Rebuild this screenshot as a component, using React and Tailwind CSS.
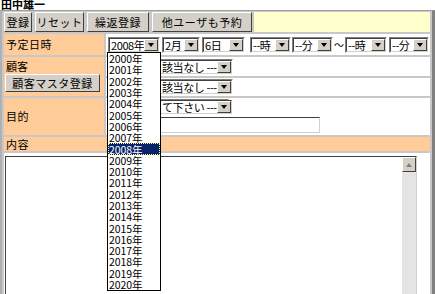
import React from "react";

const years = [];
for (let y = 2000; y <= 2020; y++) years.push(y);

function Arrow({ up }) {
  return (
    <div
      className={
        "w-0 h-0 border-l-[3.5px] border-r-[3.5px] border-l-transparent border-r-transparent " +
        (up ? "border-b-[4px] border-b-[#808080]" : "border-t-[4px] border-t-black")
      }
    />
  );
}

function Select({ w, children, className = "" }) {
  return (
    <div
      className={
        "h-[16px] flex bg-white border border-t-[#808080] border-l-[#808080] border-b-white border-r-white " +
        w +
        " " +
        className
      }
    >
      <div className="flex-1 flex border border-t-[#404040] border-l-[#404040] border-b-[#d4d0c8] border-r-[#d4d0c8]">
        <div className="flex-1 flex items-center pl-[1px] text-[11px] leading-[12px] tracking-[-0.4px] whitespace-nowrap">
          {children}
        </div>
        <div className="w-[14px] shrink-0 bg-[#d4d0c8] flex items-center justify-center border border-t-white border-l-white border-b-[#404040] border-r-[#404040]">
          <Arrow />
        </div>
      </div>
    </div>
  );
}

function Btn({ children, className = "" }) {
  return (
    <div
      className={
        "flex items-center justify-center bg-[#d4d0c8] border border-t-white border-l-white border-b-[#404040] border-r-[#404040] text-[11px] leading-[12px] tracking-[0.5px] whitespace-nowrap " +
        className
      }
    >
      {children}
    </div>
  );
}

export default function App() {
  return (
    <div className="w-[435px] h-[294px] overflow-hidden bg-white relative font-['Noto_Sans_CJK_JP',sans-serif] text-black">
      <div className="h-[10px] text-[11px] leading-[10px] font-bold -mt-[1px] pl-[1px]">田中雄一</div>

      <div className="mt-[1px] bg-[#c8c8c8] border-t border-t-[#a0a0a0] border-l-[2px] border-l-[#b0b0b0] border-r-[3px] border-r-[#808080] pl-[2px] pr-[2px] pt-[1px] flex flex-col gap-[2px]">
        {/* buttons */}
        <div className="h-[20px] flex gap-[3px]">
          <Btn className="w-[28px]">登録</Btn>
          <Btn className="w-[49px]">リセット</Btn>
          <Btn className="w-[62px]">繰返登録</Btn>
          <Btn className="w-[100px]">他ユーザも予約</Btn>
          <div className="flex-1 bg-[#ffffcc] -ml-[1px]" />
        </div>

        {/* 予定日時 */}
        <div className="h-[21px] flex gap-[2px]">
          <div className="w-[100px] bg-[#ffcc99] pl-[2px] flex items-center text-[11px] tracking-[0.5px]">予定日時</div>
          <div className="flex-1 bg-white flex items-center pl-[2px]">
            <Select w="w-[52px]">2008年</Select>
            <Select w="w-[38px]" className="ml-[2px]">2月</Select>
            <Select w="w-[43px]" className="ml-[2px]">6日</Select>
            <Select w="w-[41px]" className="ml-[5px]">--時</Select>
            <Select w="w-[41px]" className="ml-[1px]">--分</Select>
            <span className="w-[12px] text-[10px] text-center">～</span>
            <Select w="w-[42px]">--時</Select>
            <Select w="w-[40px]" className="ml-[2px]">--分</Select>
          </div>
        </div>

        {/* 顧客 */}
        <div className="h-[39px] flex gap-[2px]">
          <div className="w-[100px] bg-[#ffcc99] pl-[1px] pt-[2px] flex flex-col">
            <div className="text-[11px] leading-[14px] pl-[1px]">顧客</div>
            <Btn className="w-[95px] h-[18px] mt-[1px]">顧客マスタ登録</Btn>
          </div>
          <div className="flex-1 flex flex-col gap-[2px]">
            <div className="h-[19px] bg-white flex items-center pl-[2px]">
              <Select w="w-[125px]">
                <span className="inline-block w-[51px]" />
                該当なし ---
              </Select>
            </div>
            <div className="h-[18px] bg-white flex items-center pl-[2px]">
              <Select w="w-[125px]">
                <span className="inline-block w-[51px]" />
                該当なし ---
              </Select>
            </div>
          </div>
        </div>

        {/* 目的 */}
        <div className="h-[37px] flex gap-[2px]">
          <div className="w-[100px] bg-[#ffcc99] pl-[2px] flex items-center text-[11px] tracking-[0.5px]">目的</div>
          <div className="flex-1 bg-white flex flex-col pl-[2px] pt-[1px] gap-[2px]">
            <Select w="w-[121px]">
              <span className="inline-block w-[51px]" />
              て下さい ---
            </Select>
            <div className="w-[212px] h-[16px] border border-t-[#404040] border-l-[#404040] border-b-[#d4d0c8] border-r-[#d4d0c8] bg-white" />
          </div>
        </div>

        {/* 内容 */}
        <div className="h-[14px] bg-[#ffcc99] pl-[2px] flex items-center text-[11px] leading-[12px] tracking-[0.5px]">内容</div>

        <div className="h-[150px] bg-white pt-[3px] pl-[1px] pr-[13px]">
          <div className="h-full flex border border-t-[#404040] border-l-[#404040] border-b-[#d4d0c8] border-r-[#d4d0c8]">
            <div className="flex-1" />
            <div className="w-[14px] flex flex-col bg-[#e4e4e4]">
              <div className="h-[15px] bg-[#d4d0c8] flex items-center justify-center border border-t-white border-l-white border-b-[#404040] border-r-[#404040]">
                <Arrow up />
              </div>
            </div>
          </div>
        </div>
      </div>

      {/* open dropdown */}
      <div className="absolute left-[107px] top-[52px] w-[54px] border border-black bg-white flex flex-col">
        {years.map((y) => (
          <div
            key={y}
            className={
              "h-[11.3px] flex items-center text-[10.5px] leading-[11px] tracking-[-0.1px] pl-[1px] whitespace-nowrap " +
              (y === 2008 ? "bg-[#0a246a] text-white outline outline-1 outline-dotted outline-[#ffff80] -outline-offset-1" : "")
            }
          >
            {y}年
          </div>
        ))}
      </div>
    </div>
  );
}
